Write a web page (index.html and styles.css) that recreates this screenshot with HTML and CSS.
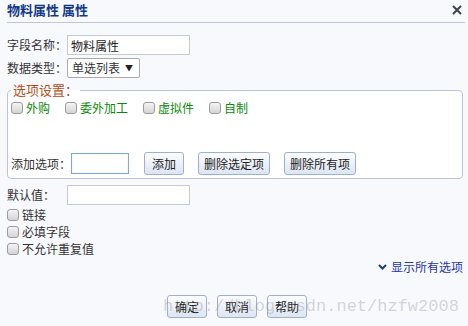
FILE: index.html
```html
<!DOCTYPE html>
<html lang="zh-CN">
<head>
    <meta charset="UTF-8">
    <title>物料属性 属性</title>
    <link rel="stylesheet" href="styles.css">
</head>
<body>
    <div class="dialog">
        <div class="titlebar">
            <span class="title">物料属性 属性</span>
            <svg class="close" width="10" height="10" viewBox="0 0 10 10">
                <path d="M1 1 L9 9 M9 1 L1 9" stroke="#3c4350" stroke-width="2" fill="none"/>
            </svg>
        </div>

        <div class="content">
            <div class="row">
                <label class="lbl">字段名称：</label>
                <input class="text" type="text" value="物料属性">
            </div>
            <div class="row row-select">
                <label class="lbl">数据类型：</label>
                <span class="select">单选列表<span class="arrow">▼</span></span>
            </div>

            <fieldset class="options">
                <legend>选项设置：</legend>
                <div class="opt-list">
                    <label class="opt"><input type="checkbox" class="cb">外购</label>
                    <label class="opt"><input type="checkbox" class="cb">委外加工</label>
                    <label class="opt"><input type="checkbox" class="cb">虚拟件</label>
                    <label class="opt"><input type="checkbox" class="cb">自制</label>
                </div>
                <div class="add-row">
                    <label class="lbl">添加选项：</label>
                    <input class="text text-add" type="text">
                    <button class="btn">添加</button>
                    <button class="btn">删除选定项</button>
                    <button class="btn">删除所有项</button>
                </div>
            </fieldset>

            <div class="row row-default">
                <label class="lbl">默认值：</label>
                <input class="text" type="text">
            </div>
            <label class="check"><input type="checkbox" class="cb">链接</label>
            <label class="check"><input type="checkbox" class="cb">必填字段</label>
            <label class="check"><input type="checkbox" class="cb">不允许重复值</label>

            <div class="more">
                <a class="more-link" href="#">
                    <svg width="9" height="6" viewBox="0 0 9 6">
                        <path d="M1 1 L4.5 4.5 L8 1" stroke="#1c3b85" stroke-width="2" fill="none"/>
                    </svg>
                    显示所有选项
                </a>
            </div>

            <div class="actions">
                <button class="btn">确定</button>
                <button class="btn">取消</button>
                <button class="btn">帮助</button>
            </div>
        </div>

        <div class="watermark">http://blog.csdn.net/hzfw2008</div>
    </div>
</body>
</html>
```

FILE: styles.css
```css
* {
    margin: 0;
    padding: 0;
    box-sizing: border-box;
}

body {
    background-color: #f8f9fd;
    color: #333;
    font-family: "Noto Sans CJK SC", "Noto Sans", sans-serif;
    font-size: 12px;
    line-height: 16px;
}

.dialog {
    position: relative;
    width: 468px;
    height: 326px;
    overflow: hidden;
}

.titlebar {
    height: 23px;
    margin: 0 3px 0 7px;
    border-bottom: 1px solid #bcc7dc;
    display: flex;
    align-items: center;
    justify-content: space-between;
    padding-bottom: 2px;
}

.title {
    font-size: 13px;
    font-weight: bold;
    color: #12388a;
}

.close {
    margin-right: 3px;
}

.content {
    padding: 0 5px 0 7px;
}

.row {
    display: flex;
    align-items: center;
    height: 20px;
    margin-top: 12px;
}

.row-select {
    margin-top: 3px;
}

.row-default {
    margin-top: 6px;
}

.lbl {
    width: 60px;
    flex-shrink: 0;
}

.text {
    width: 123px;
    height: 20px;
    border: 1px solid #c4c9d6;
    background: #fff;
    padding: 0 3px;
    font-family: inherit;
    font-size: 12px;
    color: #222;
    outline: none;
}

.select {
    display: flex;
    align-items: center;
    width: 73px;
    height: 20px;
    border: 1px solid #aaa;
    border-radius: 2px;
    background: #fff;
    padding-left: 4px;
}

.arrow {
    font-size: 8px;
    margin-left: 5px;
    color: #222;
}

.options {
    margin-top: 4px;
    border: 1px solid #b9c3e6;
    border-radius: 4px;
    background: #fff;
    padding: 1px 3px 3px 3px;
}

.options legend {
    padding: 0 2px;
    color: #b0501c;
    font-size: 13px;
}

.opt-list {
    display: flex;
    height: 17px;
    align-items: center;
}

.opt {
    display: flex;
    align-items: center;
    margin-right: 15px;
    color: #0a8a0a;
}

.cb {
    appearance: none;
    width: 12px;
    height: 12px;
    margin-right: 3px;
    border: 1px solid #9c9c9c;
    border-radius: 3px;
    background: linear-gradient(#f4f4f4, #d4d4d4);
}

.add-row {
    display: flex;
    align-items: center;
    height: 23px;
    margin-top: 36px;
}

.text-add {
    width: 58px;
    height: 21px;
    border-color: #7ba6de;
    box-shadow: inset 0 0 1px #9cc0ee;
    margin-right: 15px;
}

.btn {
    height: 23px;
    min-width: 40px;
    padding: 0 5px;
    border: 1px solid #9fb0cb;
    border-radius: 3px;
    background: linear-gradient(#fdfdff, #dce5f3);
    font-family: inherit;
    font-size: 12px;
    color: #222;
}

.add-row .btn {
    margin-right: 14px;
}

.check {
    display: flex;
    align-items: center;
    height: 17px;
}

.check:first-of-type {
    margin-top: 1px;
}

.more {
    display: flex;
    justify-content: flex-end;
    margin-top: 2px;
    height: 16px;
}

.more-link {
    display: flex;
    align-items: center;
    gap: 4px;
    color: #2336a8;
    text-decoration: none;
}

.actions {
    display: flex;
    justify-content: center;
    gap: 10px;
    margin-top: 20px;
    padding-left: 4px;
}

.watermark {
    position: absolute;
    left: 163px;
    top: 296px;
    font-family: "Liberation Mono", monospace;
    font-size: 17px;
    line-height: 22px;
    color: rgba(140, 140, 140, 0.35);
    pointer-events: none;
}
```
